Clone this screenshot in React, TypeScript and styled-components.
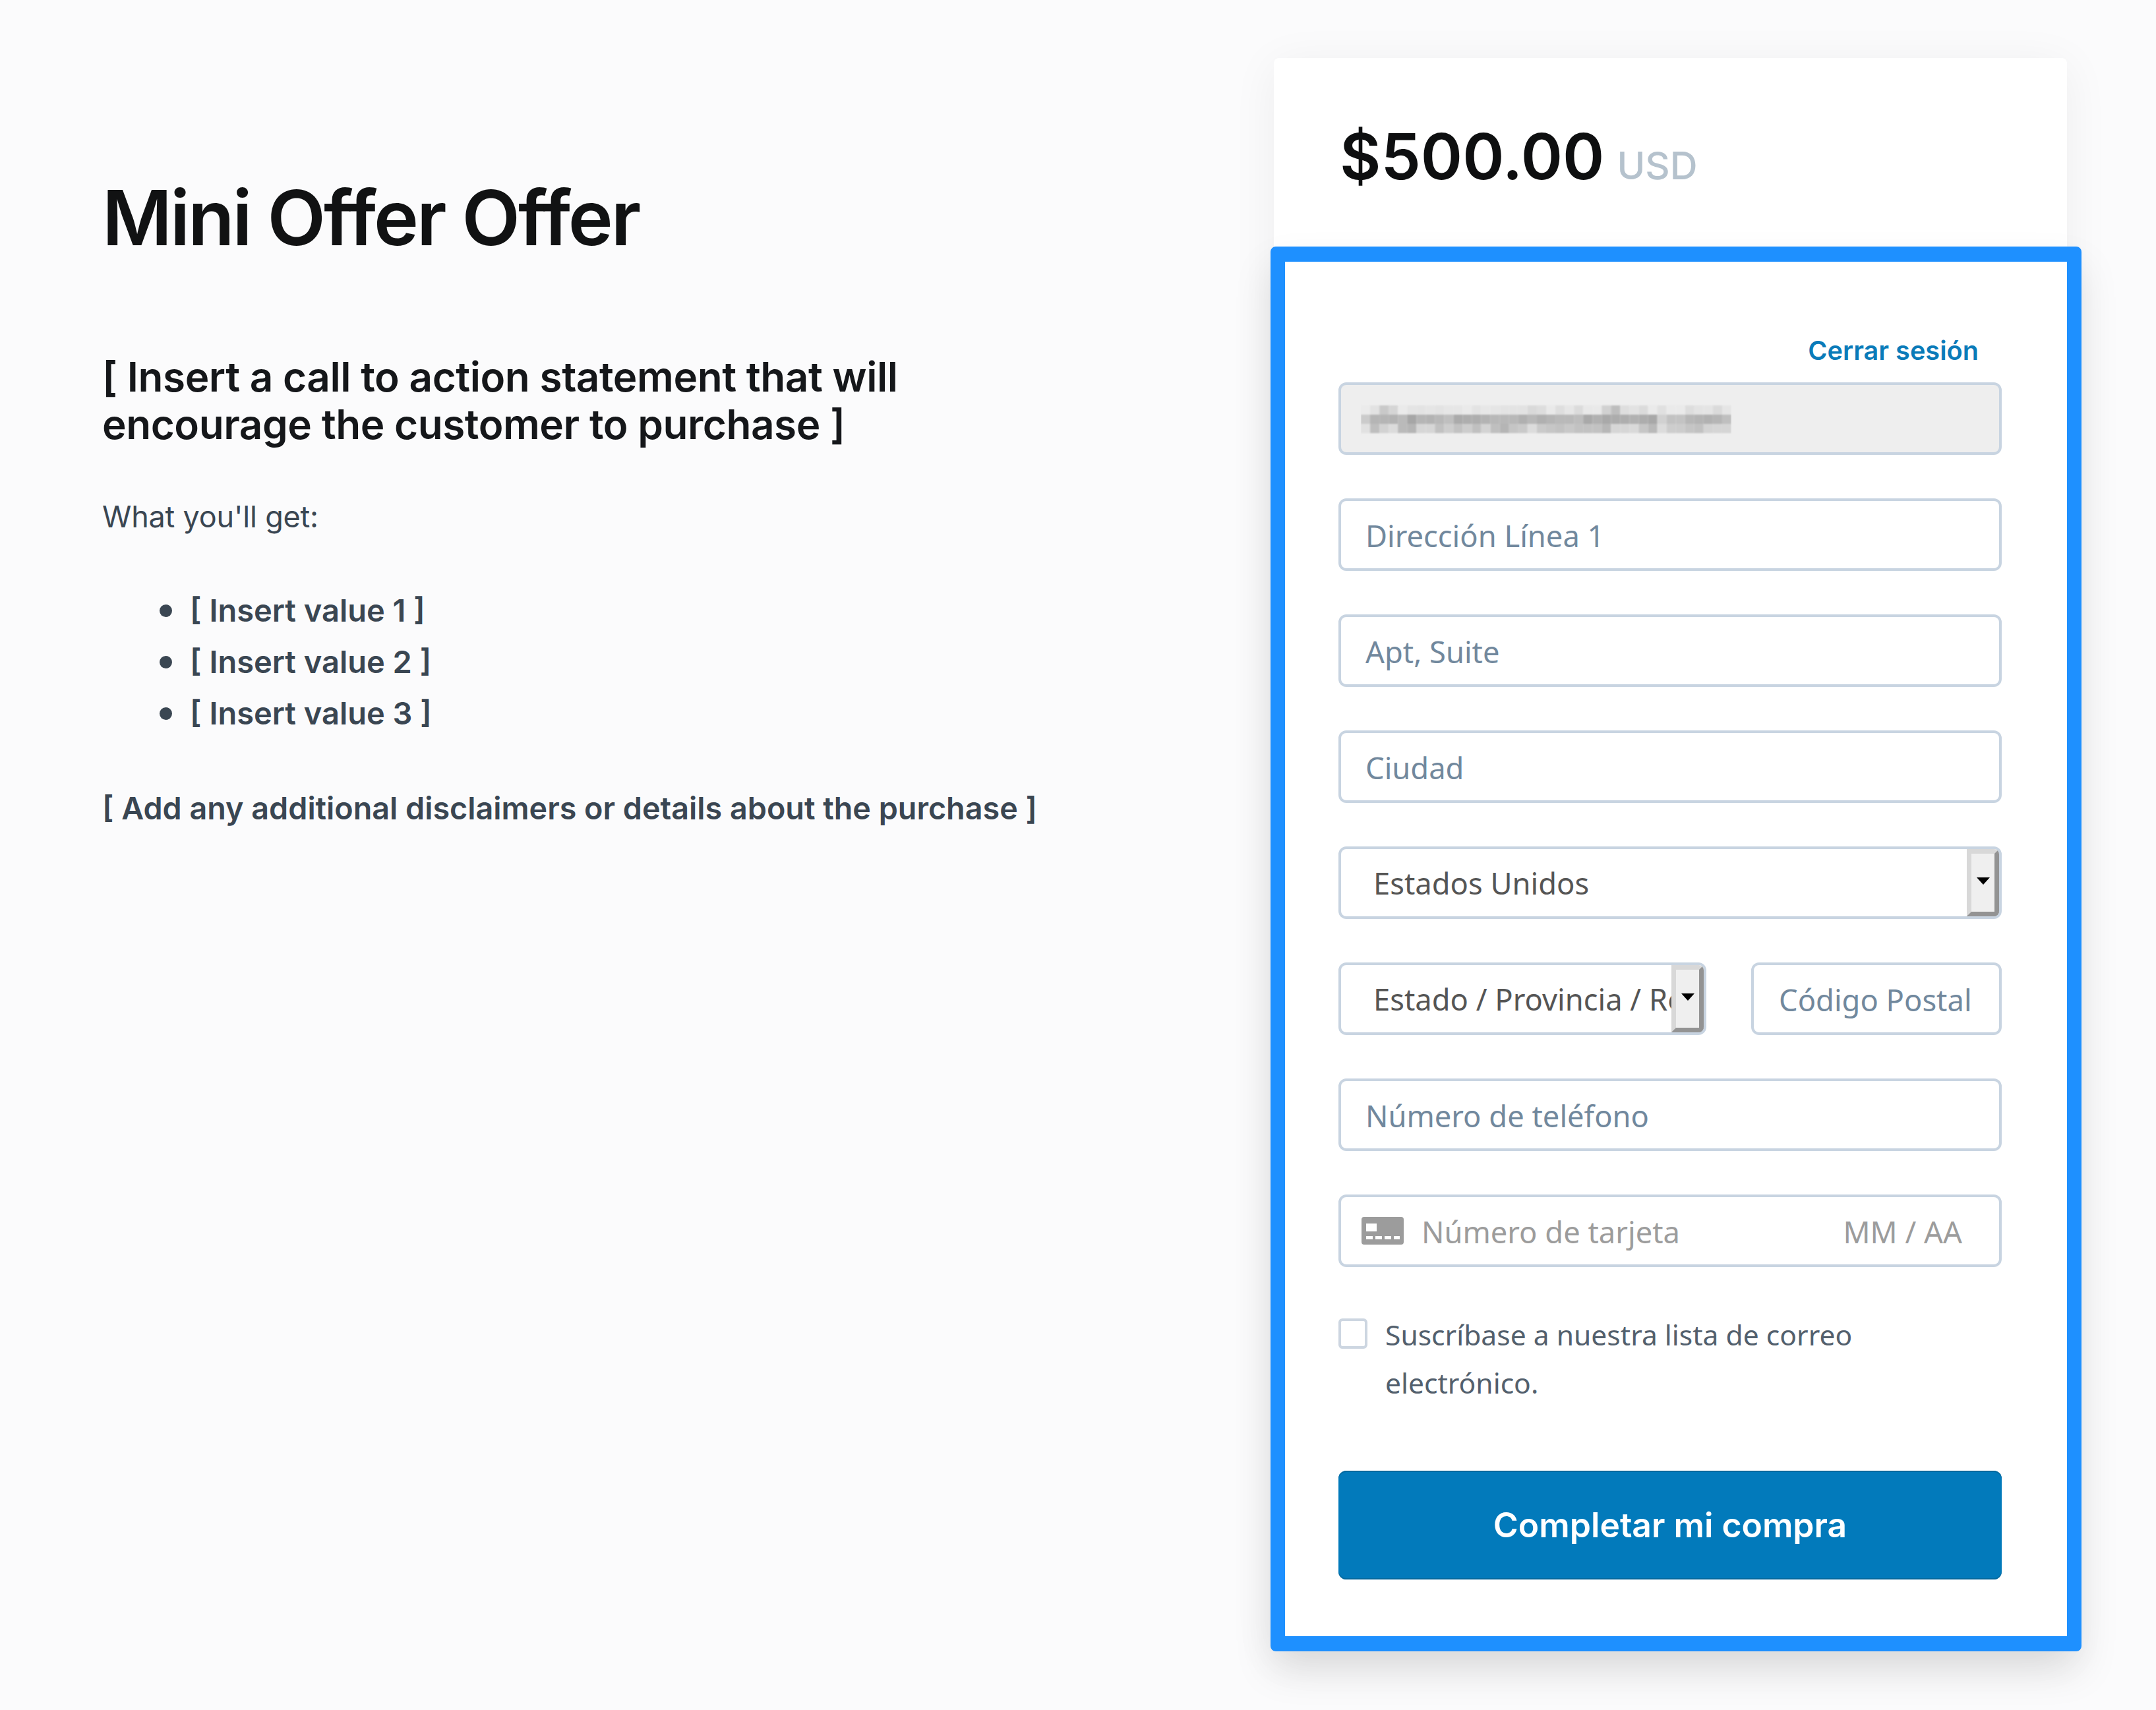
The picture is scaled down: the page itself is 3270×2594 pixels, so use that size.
import styled, { createGlobalStyle } from "styled-components";

const GlobalStyle = createGlobalStyle`
    html, body {
        margin: 0;
        padding: 0;
        background: #fbfbfc;
    }
    * {
        box-sizing: border-box;
    }
`;

const Page = styled.div`
    width: 3270px;
    height: 2594px;
    overflow: hidden;
    display: flex;
    padding: 88px 0 0 155px;
    background: #fbfbfc;
    font-family: Inter, "Liberation Sans", sans-serif;
`;

const Copy = styled.section`
    width: 1777px;
    flex-shrink: 0;
    padding-top: 172px;
`;

const Title = styled.h1`
    margin: 0;
    font-size: 115px;
    line-height: 142px;
    font-weight: 600;
    letter-spacing: -3px;
    color: #111213;
`;

const Pitch = styled.h2`
    margin: 134px 0 0;
    font-size: 62px;
    line-height: 72px;
    font-weight: 600;
    letter-spacing: -0.45px;
    color: #15171a;
`;

const Lead = styled.p`
    margin: 69px 0 0;
    font-size: 45px;
    line-height: 70px;
    font-weight: 400;
    letter-spacing: -0.2px;
    color: #3a4652;
`;

const Values = styled.ul`
    margin: 68px 0 0;
    padding: 0 0 0 87px;
    list-style: none;
    color: #3a4652;
`;

const Value = styled.li`
    display: flex;
    align-items: center;
    font-size: 47px;
    line-height: 78px;
    font-weight: 600;
    &::before {
        content: "";
        width: 19px;
        height: 19px;
        margin-right: 27px;
        border-radius: 50%;
        background: #3a4652;
    }
`;

const Disclaimer = styled.p`
    margin: 70px 0 0;
    font-size: 46.7px;
    line-height: 70px;
    font-weight: 600;
    color: #3a4652;
`;

const Card = styled.aside`
    width: 1203px;
    height: 2417px;
    flex-shrink: 0;
    display: flex;
    flex-direction: column;
    background: #fff;
    border-radius: 8px 8px 0 0;
    box-shadow: 0 10px 70px rgba(0, 0, 0, 0.06);
`;

const PriceHeader = styled.header`
    height: 287px;
    padding: 89px 0 0 100px;
    display: flex;
    align-items: baseline;
    gap: 19px;
`;

const Price = styled.span`
    font-size: 96px;
    line-height: 120px;
    font-weight: 600;
    color: #0e0f10;
`;

const Currency = styled.span`
    font-size: 58px;
    font-weight: 500;
    color: #b5c2cd;
`;

const CheckoutBox = styled.div`
    margin: 0 -22px 0 -5px;
    border: 22px solid #1e90ff;
    border-width: 23px 22px;
    border-radius: 8px;
    background: #fff;
    padding: 110px 99px 86px 81px;
    box-shadow: 0 30px 60px rgba(0, 0, 0, 0.1);
`;

const AccountRow = styled.div`
    display: flex;
    justify-content: flex-end;
    padding-right: 35px;
    margin-bottom: 23px;
`;

const SignOut = styled.a`
    font-size: 39.7px;
    line-height: 50px;
    font-weight: 600;
    color: #0a7bb9;
`;

const Fields = styled.form`
    display: flex;
    flex-direction: column;
    gap: 66px;
`;

const Row = styled.div`
    display: flex;
    gap: 68px;
`;

const fieldBox = `
    height: 110px;
    border: 4px solid #c8d4e1;
    border-radius: 12px;
    background: #fff;
`;

const Input = styled.input<{ $width?: number }>`
    ${fieldBox}
    display: block;
    width: ${(p) => (p.$width ? `${p.$width}px` : "100%")};
    flex-shrink: 0;
    padding: 2px 0 0 ${(p) => (p.$width ? 38 : 37)}px;
    font-family: "Noto Sans", sans-serif;
    font-size: 45.3px;
    outline: none;
    &::placeholder {
        color: #71889d;
        opacity: 1;
    }
`;

const LockedField = styled.div`
    ${fieldBox}
    background: #eeeeee;
    display: flex;
    align-items: center;
    padding: 2px 0 0 30px;
`;

const Select = styled.div<{ $width?: number }>`
    ${fieldBox}
    width: ${(p) => (p.$width ? `${p.$width}px` : "100%")};
    display: flex;
    align-items: stretch;
    overflow: hidden;
`;

const SelectValue = styled.span`
    flex: 1;
    min-width: 0;
    padding: 2px 0 0 49px;
    overflow: hidden;
    white-space: nowrap;
    font-family: "Noto Sans", sans-serif;
    font-size: 45.3px;
    line-height: 100px;
    color: #555;
`;

const SelectButton = styled.span`
    width: 49px;
    flex-shrink: 0;
    display: flex;
    align-items: center;
    justify-content: center;
    background: #efefef;
    border-style: solid;
    border-width: 7px;
    border-color: #d8d8d8 #939393 #939393 #d8d8d8;
`;

const SelectArrow = styled.span`
    width: 0;
    height: 0;
    margin-bottom: 6px;
    border-style: solid;
    border-width: 11px 10px 0;
    border-color: #000 transparent transparent;
`;

const CardField = styled.div`
    ${fieldBox}
    display: flex;
    align-items: center;
    padding: 0 56px 0 31px;
    font-family: "Noto Sans", sans-serif;
    font-size: 45.3px;
    color: #9c9c9c;
`;

const CardNumber = styled.span`
    flex: 1;
    margin-left: 27px;
    padding-top: 2px;
`;

const CardExpiry = styled.span`
    padding-top: 2px;
`;

const Subscribe = styled.label`
    display: flex;
    align-items: flex-start;
    gap: 27px;
`;

const Checkbox = styled.span`
    width: 44px;
    height: 46px;
    flex-shrink: 0;
    margin-top: 12px;
    border: 4px solid #cdd6e1;
    border-radius: 6px;
    background: #fff;
`;

const SubscribeText = styled.span`
    width: 800px;
    font-family: "Noto Sans", sans-serif;
    font-size: 42.6px;
    line-height: 73px;
    color: #53606d;
`;

const BuyButton = styled.button`
    height: 165px;
    margin-top: 31px;
    padding: 0 0 2px;
    border: none;
    border-radius: 12px;
    background: #027abb;
    box-shadow: inset 0 2px 0 #03689d, inset 0 -2px 0 #03689d;
    color: #fff;
    font-family: Inter, sans-serif;
    font-size: 51.6px;
    font-weight: 600;
`;

// pixelated email, grey levels read off the reference
const BLUR_ROWS = [
    "eb e2 c9 d5 ea e4 e3 e5 e3 e6 e6 ea e3 e7 e5 e3 e3 e2 d9 dd e9 de e6 db e8 e9 d1 bd de e2 db ea e0 ea ea dd e3 e4 da e5",
    "cb b5 b5 b3 ba a6 b5 b3 b8 bf ab ae ae b3 b8 b8 b8 b0 b8 b0 b5 b9 b9 bd a9 b1 a9 ac ae b1 ad a8 d1 c2 c3 b7 b4 b1 b5 bf",
    "e1 be d2 db ba b5 d6 d6 c1 cd c2 cd c0 d3 bf b5 c5 c9 dc ca c6 c2 c8 c2 c2 c2 b7 d6 d6 d9 c6 b9 dc cd cc c5 c1 d3 d5 d5",
];

function BlurredEmail() {
    return (
        <svg width="562" height="46" viewBox="0 0 562 46">
            <g style={{ filter: "blur(1px)" }}>
                {BLUR_ROWS.map((row, y) =>
                    row.split(" ").map((grey, x) => (
                        <rect key={`${x}-${y}`} x={x * 14.05} y={2 + y * 14} width="14.05" height="14" fill={`#${grey}${grey}${grey}`} />
                    ))
                )}
            </g>
        </svg>
    );
}

function CardIcon() {
    return (
        <svg width="64" height="42" viewBox="0 0 64 42">
            <path
                fill="#9c9c9c"
                fillRule="evenodd"
                d="M4 0h56a4 4 0 0 1 4 4v34a4 4 0 0 1-4 4H4a4 4 0 0 1-4-4V4a4 4 0 0 1 4-4zM7 10v12h16V10zM7 29v5h10v-5zM21 29v5h10v-5zM35 29v5h10v-5zM49 29v5h9v-5z"
            />
        </svg>
    );
}

function Dropdown({ label, width }: { label: string; width?: number }) {
    return (
        <Select $width={width}>
            <SelectValue>{label}</SelectValue>
            <SelectButton>
                <SelectArrow />
            </SelectButton>
        </Select>
    );
}

function App() {
    return (
        <Page>
            <GlobalStyle />
            <Copy>
                <Title>Mini Offer Offer</Title>
                <Pitch>
                    [ Insert a call to action statement that will
                    <br />
                    encourage the customer to purchase ]
                </Pitch>
                <Lead>What you'll get:</Lead>
                <Values>
                    <Value>[ Insert value 1 ]</Value>
                    <Value>[ Insert value 2 ]</Value>
                    <Value>[ Insert value 3 ]</Value>
                </Values>
                <Disclaimer>[ Add any additional disclaimers or details about the purchase ]</Disclaimer>
            </Copy>
            <Card>
                <PriceHeader>
                    <Price>$500.00</Price>
                    <Currency>USD</Currency>
                </PriceHeader>
                <CheckoutBox>
                    <AccountRow>
                        <SignOut>Cerrar sesión</SignOut>
                    </AccountRow>
                    <Fields>
                        <LockedField>
                            <BlurredEmail />
                        </LockedField>
                        <Input placeholder="Dirección Línea 1" />
                        <Input placeholder="Apt, Suite" />
                        <Input placeholder="Ciudad" />
                        <Dropdown label="Estados Unidos" />
                        <Row>
                            <Dropdown label="Estado / Provincia / Región" width={558} />
                            <Input placeholder="Código Postal" $width={380} />
                        </Row>
                        <Input placeholder="Número de teléfono" />
                        <CardField>
                            <CardIcon />
                            <CardNumber>Número de tarjeta</CardNumber>
                            <CardExpiry>MM / AA</CardExpiry>
                        </CardField>
                        <Subscribe>
                            <Checkbox />
                            <SubscribeText>Suscríbase a nuestra lista de correo electrónico.</SubscribeText>
                        </Subscribe>
                        <BuyButton type="button">Completar mi compra</BuyButton>
                    </Fields>
                </CheckoutBox>
            </Card>
        </Page>
    );
}

export default App;
